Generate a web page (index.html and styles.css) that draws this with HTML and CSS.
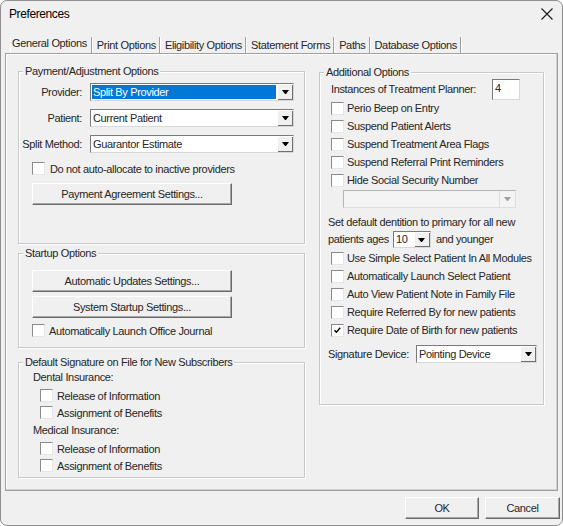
FILE: index.html
```html
<!DOCTYPE html>
<html lang="en">

<head>
  <meta charset="UTF-8" />
  <meta name="viewport" content="width=device-width, initial-scale=1.0" />
  <title>Preferences</title>
  <link rel="stylesheet" href="styles.css">
</head>

<body>
  <div class="window">
    <div class="titlebar">
      <span class="title">Preferences</span>
      <svg class="close" width="12" height="12" viewBox="0 0 12 12">
        <path d="M0.5 0.5 L11.5 11.5 M11.5 0.5 L0.5 11.5" stroke="#1a1a1a" stroke-width="1.1" fill="none" />
      </svg>
    </div>

    <ul class="tabs">
      <li class="tab active">General Options</li>
      <li class="tab">Print Options</li>
      <li class="tab">Eligibility Options</li>
      <li class="tab">Statement Forms</li>
      <li class="tab">Paths</li>
      <li class="tab">Database Options</li>
    </ul>

    <div class="panel">
      <div class="col-left">

        <!-- Payment / adjustment -->
        <div class="group group-payment">
          <span class="group-title">Payment/Adjustment Options</span>
          <div class="field-row">
            <span class="field-label">Provider:</span>
            <div class="combo combo-wide">
              <span class="combo-text highlight">Split By Provider</span>
              <span class="combo-btn"><span class="arrow"></span></span>
            </div>
          </div>
          <div class="field-row">
            <span class="field-label">Patient:</span>
            <div class="combo combo-wide">
              <span class="combo-text">Current Patient</span>
              <span class="combo-btn"><span class="arrow"></span></span>
            </div>
          </div>
          <div class="field-row">
            <span class="field-label">Split Method:</span>
            <div class="combo combo-wide">
              <span class="combo-text">Guarantor Estimate</span>
              <span class="combo-btn"><span class="arrow"></span></span>
            </div>
          </div>
          <div class="check-row allocate-row"><span class="check"></span>Do not auto-allocate to inactive providers</div>
          <button class="btn btn-wide agreement-btn">Payment Agreement Settings...</button>
        </div>

        <!-- Startup -->
        <div class="group group-startup">
          <span class="group-title">Startup Options</span>
          <button class="btn btn-wide">Automatic Updates Settings...</button>
          <button class="btn btn-wide second-btn">System Startup Settings...</button>
          <div class="check-row journal-row"><span class="check"></span>Automatically Launch Office Journal</div>
        </div>

        <!-- Signature on file -->
        <div class="group group-signature">
          <span class="group-title">Default Signature on File for New Subscribers</span>
          <div class="sub-label">Dental Insurance:</div>
          <div class="check-row sig-row first"><span class="check"></span>Release of Information</div>
          <div class="check-row sig-row"><span class="check"></span>Assignment of Benefits</div>
          <div class="sub-label medical">Medical Insurance:</div>
          <div class="check-row sig-row first"><span class="check"></span>Release of Information</div>
          <div class="check-row sig-row"><span class="check"></span>Assignment of Benefits</div>
        </div>
      </div>

      <div class="col-right">
        <div class="group group-additional">
          <span class="group-title">Additional Options</span>
          <div class="planner-row">
            <span class="planner-label">Instances of Treatment Planner:</span>
            <div class="text-input">4</div>
          </div>
          <div class="check-row opt-row"><span class="check"></span>Perio Beep on Entry</div>
          <div class="check-row opt-row"><span class="check"></span>Suspend Patient Alerts</div>
          <div class="check-row opt-row"><span class="check"></span>Suspend Treatment Area Flags</div>
          <div class="check-row opt-row"><span class="check"></span>Suspend Referral Print Reminders</div>
          <div class="check-row opt-row"><span class="check"></span>Hide Social Security Number</div>
          <div class="combo combo-disabled">
            <span class="combo-text"></span>
            <span class="combo-btn"><span class="arrow"></span></span>
          </div>

          <div class="dentition">
            <div class="dentition-line">Set default dentition to primary for all new</div>
            <div class="dentition-line ages-line">
              patients ages
              <div class="combo combo-age">
                <span class="combo-text">10</span>
                <span class="combo-btn"><span class="arrow"></span></span>
              </div>
              and younger
            </div>
          </div>

          <div class="check-row opt-row first"><span class="check"></span>Use Simple Select Patient In All Modules</div>
          <div class="check-row opt-row"><span class="check"></span>Automatically Launch Select Patient</div>
          <div class="check-row opt-row"><span class="check"></span>Auto View Patient Note in Family File</div>
          <div class="check-row opt-row"><span class="check"></span>Require Referred By for new patients</div>
          <div class="check-row opt-row">
            <span class="check">
              <svg width="11" height="11" viewBox="0 0 11 11">
                <path d="M2.5 5.2 L4.4 7.2 L8.2 2.8" stroke="#000" stroke-width="1.5" fill="none" />
              </svg>
            </span>Require Date of Birth for new patients
          </div>

          <div class="device-row">
            <span class="device-label">Signature Device:</span>
            <div class="combo combo-device">
              <span class="combo-text">Pointing Device</span>
              <span class="combo-btn"><span class="arrow"></span></span>
            </div>
          </div>
        </div>
      </div>
    </div>

    <div class="footer">
      <button class="btn btn-ok">OK</button>
      <button class="btn btn-cancel">Cancel</button>
    </div>
  </div>
</body>

</html>
```

FILE: styles.css
```css
body {
  margin: 0;
  background-color: #fff;
  font-family: 'Liberation Sans', Arial, sans-serif;
  font-size: 11px;
  letter-spacing: -0.35px;
  color: #262626;
}

/* Dialog frame */
.window {
  width: 563px;
  height: 526px;
  box-sizing: border-box;
  border: 1px solid #8f8f8f;
  border-radius: 7px;
  background-color: #f0f0f0;
  overflow: hidden;
}

.titlebar {
  height: 26px;
  display: flex;
  align-items: center;
  justify-content: space-between;
  padding: 0 9px 0 8px;
}

.title {
  font-size: 12px;
  letter-spacing: -0.4px;
  color: #000;
}

/* Tab strip */
.tabs {
  list-style: none;
  display: flex;
  height: 16px;
  margin: 10px 0 0 9px;
  padding: 0;
}

.tab {
  line-height: 16px;
  padding: 0 3px 0 4px;
  margin-right: 1px;
  border-right: 1px solid #a0a0a0;
  box-shadow: 1px 0 0 #fff;
  white-space: nowrap;
}

.tab.active {
  line-height: 13px;
  padding: 0 4px 0 1px;
  border-left: 1px solid #fff;
}

/* Tab page */
.panel {
  display: flex;
  gap: 14px;
  width: 553px;
  height: 438px;
  box-sizing: border-box;
  margin-left: 4px;
  padding: 17px 13px 0 12px;
  border: 1px solid #a0a0a0;
  box-shadow: inset -1px -1px 0 #cfcfcf, inset 1px 1px 0 #fff;
}

.col-left {
  width: 287px;
}

.col-right {
  width: 225px;
}

/* Group boxes */
.group {
  position: relative;
  box-sizing: border-box;
  border: 1px solid #c9c9c9;
  box-shadow: inset 1px 1px 0 #fff, 1px 1px 0 #fff;
}

.group-title {
  position: absolute;
  top: -7px;
  left: 4px;
  padding: 0 2px;
  line-height: 13px;
  background-color: #f0f0f0;
  white-space: nowrap;
}

.group-payment {
  height: 173px;
  padding-top: 11px;
}

.group-startup {
  height: 95px;
  margin-top: 9px;
  padding-top: 16px;
}

.group-signature {
  height: 116px;
  margin-top: 14px;
  padding: 8px 0 0 14px;
}

.group-additional {
  height: 333px;
  margin-top: 1px;
  padding-top: 6px;
}

/* Label + combo rows */
.field-row {
  display: flex;
  align-items: center;
  height: 18px;
}

.field-row + .field-row {
  margin-top: 8px;
}

.field-label {
  width: 63px;
  margin-right: 8px;
  text-align: right;
}

.combo {
  display: flex;
  height: 18px;
  box-sizing: border-box;
  border: 1px solid;
  border-color: #7a7a7a #d8d8d8 #d8d8d8 #7a7a7a;
  background-color: #fff;
}

.combo-wide {
  width: 204px;
}

.combo-text {
  flex: 1;
  padding-left: 2px;
  line-height: 16px;
  white-space: nowrap;
}

.combo-text.highlight {
  margin: 1px;
  line-height: 14px;
  padding-left: 1px;
  background-color: #0078d7;
  color: #fff;
}

.combo-btn {
  width: 16px;
  display: flex;
  align-items: center;
  justify-content: center;
  background-color: #f0f0f0;
  box-shadow: inset 1px 1px 0 #fff, inset -1px -1px 0 #6f6f6f;
}

.arrow {
  width: 1px;
  height: 0;
  border-left: 3px solid transparent;
  border-right: 3px solid transparent;
  border-top: 4px solid #000;
}

/* Checkboxes */
.check-row {
  display: flex;
  align-items: center;
  gap: 5px;
  height: 13px;
  white-space: nowrap;
}

.check {
  width: 13px;
  height: 13px;
  box-sizing: border-box;
  display: flex;
  align-items: center;
  justify-content: center;
  border: 1px solid;
  border-color: #8a8a8a #e6e6e6 #e6e6e6 #8a8a8a;
  background-color: #fff;
  flex-shrink: 0;
}

.allocate-row {
  margin: 9px 0 0 13px;
}

.journal-row {
  margin: 6px 0 0 13px;
  gap: 4px;
}

/* Push buttons */
.btn {
  display: block;
  height: 22px;
  padding: 0;
  font-family: inherit;
  font-size: 11px;
  letter-spacing: -0.35px;
  color: #262626;
  background-color: #f0f0f0;
  border: 1px solid;
  border-color: #fff #6a6a6a #6a6a6a #fff;
  box-shadow: inset -1px -1px 0 #a8a8a8;
}

.btn-wide {
  width: 200px;
  margin-left: 13px;
}

.agreement-btn {
  margin-top: 8px;
}

.second-btn {
  margin-top: 4px;
}

/* Signature on file */
.sub-label {
  line-height: 13px;
}

.sub-label.medical {
  margin-top: 3px;
}

.sig-row {
  height: 17px;
  padding-left: 7px;
  gap: 4px;
}

.sig-row.first {
  margin-top: 3px;
}

/* Additional options */
.planner-row {
  display: flex;
  align-items: center;
  height: 20px;
  padding-left: 11px;
}

.planner-label {
  width: 161px;
}

.text-input {
  width: 28px;
  height: 21px;
  box-sizing: border-box;
  padding-left: 2px;
  line-height: 17px;
  border: 1px solid;
  border-color: #7a7a7a #d8d8d8 #d8d8d8 #7a7a7a;
  background-color: #fff;
  align-self: flex-start;
}

.opt-row {
  height: 18px;
  padding-left: 11px;
  gap: 3px;
}

.combo-disabled {
  width: 173px;
  margin: 1px 0 0 23px;
  border-color: #b4b4b4 #dedede #dedede #b4b4b4;
  background-color: #f4f4f4;
}

.combo-disabled .combo-btn {
  box-shadow: inset 1px 0 0 #dcdcdc;
  background-color: #f4f4f4;
}

.combo-disabled .arrow {
  border-top-color: #a0a0a0;
}

.dentition {
  margin-top: 6px;
  padding-left: 8px;
}

.dentition-line {
  height: 17px;
  line-height: 17px;
  white-space: nowrap;
}

.ages-line {
  display: flex;
  align-items: center;
}

.combo-age {
  width: 38px;
  height: 17px;
  margin: 0 5px 0 4px;
}

.combo-age .combo-text {
  line-height: 15px;
}

.opt-row.first {
  margin-top: 1px;
}

.device-row {
  display: flex;
  align-items: center;
  margin-top: 6px;
  padding-left: 8px;
}

.device-label {
  width: 88px;
}

.combo-device {
  width: 121px;
}

/* Dialog buttons */
.footer {
  display: flex;
  justify-content: flex-end;
  gap: 6px;
  padding: 6px 2px 0 0;
}

.btn-ok {
  width: 74px;
}

.btn-cancel {
  width: 75px;
}
```
